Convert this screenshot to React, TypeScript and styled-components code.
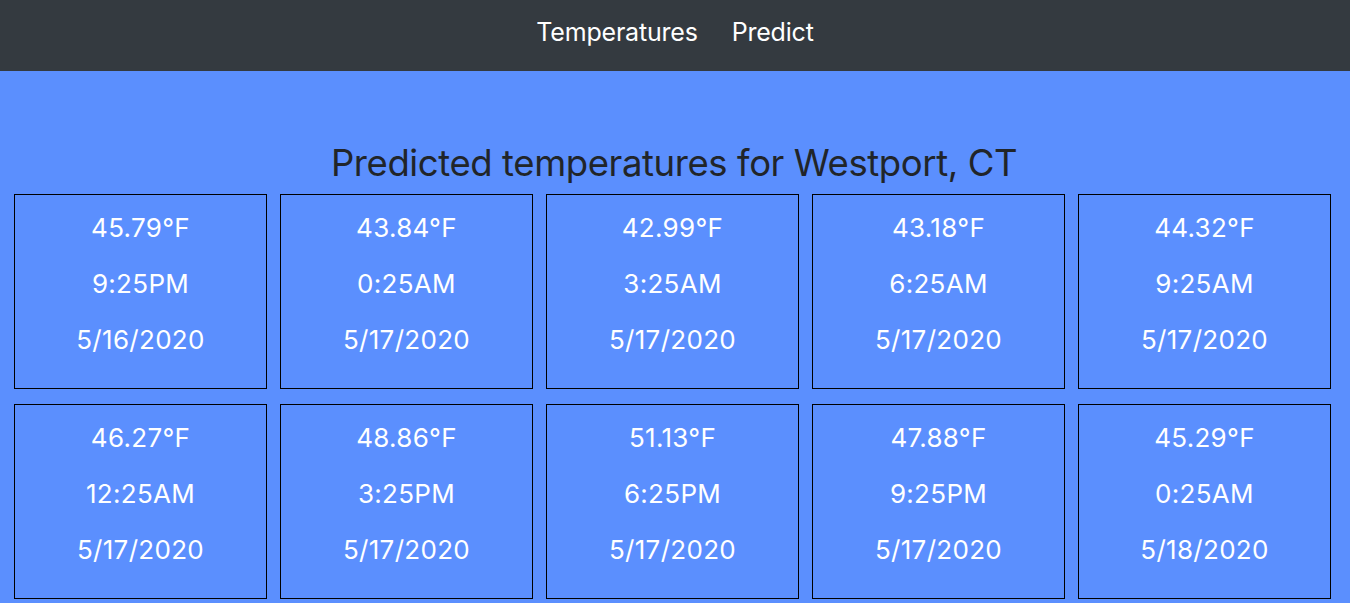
import React from "react";
import styled, { createGlobalStyle } from "styled-components";

const Global = createGlobalStyle`
  html, body { margin: 0; padding: 0; }
  body {
    background: #5b8ffe;
    font-family: Inter, "Open Sans", "Liberation Sans", sans-serif;
    overflow: hidden;
  }
`;

const Nav = styled.nav`
  height: 71px;
  background: #343a40;
  display: flex;
  justify-content: center;
  align-items: center;
  gap: 34px;
  padding-bottom: 8px;
  box-sizing: border-box;
`;

const NavLink = styled.a`
  color: #ffffff;
  font-size: 25px;
  text-decoration: none;
  letter-spacing: -0.2px;
`;

const Main = styled.main`
  padding: 70px 16px 0 14px;
`;

const Heading = styled.h1`
  margin: 0 0 9px;
  text-align: center;
  font-weight: 400;
  font-size: 36.5px;
  line-height: 44px;
  color: #212529;
  letter-spacing: -0.4px;
`;

const Grid = styled.div`
  display: grid;
  grid-template-columns: repeat(5, 253px);
  column-gap: 13px;
  row-gap: 15px;
`;

const Card = styled.div`
  height: 195px;
  box-sizing: border-box;
  border: 1px solid #000;
  display: flex;
  flex-direction: column;
  align-items: center;
  padding-top: 5px;
`;

const Line = styled.div`
  color: #ffffff;
  font-size: 26px;
  line-height: 56px;
  letter-spacing: 0.3px;
`;

const data = [
  ["45.79°F", "9:25PM", "5/16/2020"],
  ["43.84°F", "0:25AM", "5/17/2020"],
  ["42.99°F", "3:25AM", "5/17/2020"],
  ["43.18°F", "6:25AM", "5/17/2020"],
  ["44.32°F", "9:25AM", "5/17/2020"],
  ["46.27°F", "12:25AM", "5/17/2020"],
  ["48.86°F", "3:25PM", "5/17/2020"],
  ["51.13°F", "6:25PM", "5/17/2020"],
  ["47.88°F", "9:25PM", "5/17/2020"],
  ["45.29°F", "0:25AM", "5/18/2020"],
];

export default function App() {
  return (
    <>
      <Global />
      <Nav>
        <NavLink href="#">Temperatures</NavLink>
        <NavLink href="#">Predict</NavLink>
      </Nav>
      <Main>
        <Heading>Predicted temperatures for Westport, CT</Heading>
        <Grid>
          {data.map((d, i) => (
            <Card key={i}>
              {d.map((t, j) => (
                <Line key={j}>{t}</Line>
              ))}
            </Card>
          ))}
        </Grid>
      </Main>
    </>
  );
}
